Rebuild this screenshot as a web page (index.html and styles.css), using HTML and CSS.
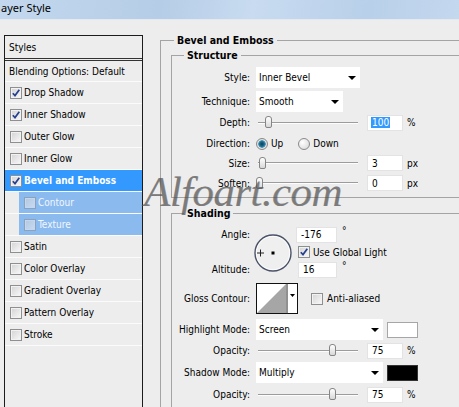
FILE: index.html
```html
<!DOCTYPE html>
<html>
<head>
<meta charset="utf-8">
<title>Layer Style</title>
<link rel="stylesheet" href="styles.css">
</head>
<body>
<div class="titlebar">ayer Style</div>
<div class="main">
  <div class="panel">
    <div class="p-row p-head">Styles</div>
    <div class="p-row p-blend">Blending Options: Default</div>
    <div class="p-row"><span class="cb"><svg width="10" height="10" viewBox="0 0 10 10"><path d="M1.8 5.2 L4 7.6 L8.3 1.8" fill="none" stroke="#25408f" stroke-width="1.7"/></svg></span>Drop Shadow</div>
    <div class="p-row"><span class="cb"><svg width="10" height="10" viewBox="0 0 10 10"><path d="M1.8 5.2 L4 7.6 L8.3 1.8" fill="none" stroke="#25408f" stroke-width="1.7"/></svg></span>Inner Shadow</div>
    <div class="p-row"><span class="cb"></span>Outer Glow</div>
    <div class="p-row"><span class="cb"></span>Inner Glow</div>
    <div class="p-row sel"><span class="cb"><svg width="10" height="10" viewBox="0 0 10 10"><path d="M1.8 5.2 L4 7.6 L8.3 1.8" fill="none" stroke="#25408f" stroke-width="1.7"/></svg></span>Bevel and Emboss</div>
    <div class="p-row sub"><div class="sub-in"><span class="cb faded"></span>Contour</div></div>
    <div class="p-row sub"><div class="sub-in"><span class="cb faded"></span>Texture</div></div>
    <div class="p-row"><span class="cb"></span>Satin</div>
    <div class="p-row"><span class="cb"></span>Color Overlay</div>
    <div class="p-row"><span class="cb"></span>Gradient Overlay</div>
    <div class="p-row"><span class="cb"></span>Pattern Overlay</div>
    <div class="p-row"><span class="cb"></span>Stroke</div>
  </div>

  <div class="content">
    <fieldset class="outer">
      <legend>Bevel and Emboss</legend>

      <fieldset class="inner structure">
        <legend>Structure</legend>
        <div class="f-row r-select gap3">
          <span class="lbl">Style:</span>
          <div class="select w-style"><span>Inner Bevel</span><span class="arrow"></span></div>
        </div>
        <div class="f-row r-select gap2">
          <span class="lbl">Technique:</span>
          <div class="select w-tech"><span>Smooth</span><span class="arrow"></span></div>
        </div>
        <div class="f-row r-17 gap4">
          <span class="lbl">Depth:</span>
          <div class="slider"><span class="track"></span><span class="thumb" style="left:9px"></span></div>
          <div class="num"><span class="hl">100</span></div>
          <span class="unit">%</span>
        </div>
        <div class="f-row r-17 gap3">
          <span class="lbl">Direction:</span>
          <span class="radio on"></span><span class="rtxt">Up</span>
          <span class="radio down"></span><span class="rtxt">Down</span>
        </div>
        <div class="f-row r-16 gap4">
          <span class="lbl">Size:</span>
          <div class="slider"><span class="track"></span><span class="thumb" style="left:3px"></span></div>
          <div class="num">3</div>
          <span class="unit">px</span>
        </div>
        <div class="f-row r-16">
          <span class="lbl">Soften:</span>
          <div class="slider"><span class="track"></span><span class="thumb" style="left:0px"></span></div>
          <div class="num">0</div>
          <span class="unit">px</span>
        </div>
      </fieldset>

      <fieldset class="inner shading">
        <legend>Shading</legend>
        <div class="angle-grid">
          <span class="lbl g-angle">Angle:</span>
          <svg class="dial" width="38" height="40" viewBox="0 0 38 40">
            <circle cx="19" cy="20" r="18" fill="#efefef" stroke="#4a5268" stroke-width="1.4"/>
            <circle cx="19" cy="20" r="16.6" fill="none" stroke="#ffffff" stroke-width="0.8"/>
            <path d="M3 20 H10 M6.5 16.5 V23.5" stroke="#222" stroke-width="1"/>
            <rect x="17.5" y="18.5" width="3" height="3" fill="#000"/>
          </svg>
          <div class="g-ain"><div class="num ang">-176</div><span class="deg">°</span></div>
          <div class="g-gl"><span class="cb"><svg width="10" height="10" viewBox="0 0 10 10"><path d="M1.8 5.2 L4 7.6 L8.3 1.8" fill="none" stroke="#25408f" stroke-width="1.7"/></svg></span><span>Use Global Light</span></div>
          <span class="lbl g-alt">Altitude:</span>
          <div class="g-altin"><div class="num alt">16</div><span class="deg">°</span></div>
        </div>
        <div class="f-row r-31 mt5">
          <span class="lbl">Gloss Contour:</span>
          <svg class="contour" width="42" height="31" viewBox="0 0 42 31">
            <rect x="0.5" y="0.5" width="41" height="30" fill="#fff" stroke="#111"/>
            <polygon points="1,30 30,1 30,30" fill="#a6a6a6"/>
            <line x1="31" y1="0" x2="31" y2="31" stroke="#222"/>
            <polygon points="34,11 39,11 36.5,14" fill="#000"/>
          </svg>
          <span class="cb aa"></span><span>Anti-aliased</span>
        </div>
        <div class="f-row r-select mt5">
          <span class="lbl">Highlight Mode:</span>
          <div class="select w-mode"><span>Screen</span><span class="arrow"></span></div>
          <span class="swatch white"></span>
        </div>
        <div class="f-row r-17 mt2">
          <span class="lbl">Opacity:</span>
          <div class="slider"><span class="track"></span><span class="thumb" style="left:73px"></span></div>
          <div class="num">75</div>
          <span class="unit">%</span>
        </div>
        <div class="f-row r-select mt3">
          <span class="lbl">Shadow Mode:</span>
          <div class="select w-mode"><span>Multiply</span><span class="arrow"></span></div>
          <span class="swatch black"></span>
        </div>
        <div class="f-row r-17 mt3">
          <span class="lbl">Opacity:</span>
          <div class="slider"><span class="track"></span><span class="thumb" style="left:73px"></span></div>
          <div class="num">75</div>
          <span class="unit">%</span>
        </div>
      </fieldset>
    </fieldset>
  </div>
</div>
<div class="watermark">Alfoart.com</div>
</body>
</html>
```
FILE: styles.css
```css
* { box-sizing: border-box; }
html, body { margin: 0; padding: 0; }
body {
  width: 459px;
  height: 407px;
  overflow: hidden;
  position: relative;
  background: #ededed;
  font-family: "DejaVu Sans Condensed", "Liberation Sans", sans-serif;
  font-size: 10px;
  color: #000;
}

.titlebar {
  height: 20px;
  padding: 1px 0 0 1px;
  background: linear-gradient(100deg, #c3d8ee 0%, #b6cde7 35%, #c8dbf0 55%, #b9d0ea 80%, #c4d8ee 100%);
  border-bottom: 1px solid #e4e9ef;
  font-family: "Noto Sans", "Open Sans", sans-serif;
  font-size: 11px;
  line-height: 14px;
  color: #000;
}

.main { display: flex; height: 387px; }

/* ---------- left styles list ---------- */
.panel {
  margin: 15px 0 0 4px;
  width: 139px;
  flex: none;
  border: 1px solid #1c1c1c;
  border-bottom: none;
}
.p-row {
  height: 22px;
  border-bottom: 1px solid #fbfbfb;
  display: flex;
  align-items: center;
  padding-left: 5px;
  white-space: nowrap;
}
.p-head { height: 25px; padding-left: 4px; border-bottom: 3px double #333; }
.p-blend { height: 21px; padding-left: 4px; }
.sel { background: #3399ff; color: #fff; font-weight: bold; }
.sub { padding-left: 14px; }
.sub-in {
  align-self: stretch;
  flex: 1;
  display: flex;
  align-items: center;
  padding-left: 5px;
  background: #8bbaee;
  color: #f2f7ff;
}

.cb {
  width: 12px;
  height: 12px;
  flex: none;
  margin-right: 2px;
  border: 1px solid #8e8f8f;
  background: linear-gradient(135deg, #d3d3d3, #f9f9f9);
  box-shadow: inset 0 0 0 1px #f2f2f2;
  display: flex;
  align-items: center;
  justify-content: center;
}
.cb svg { display: block; }
.cb.faded { opacity: 0.55; }

/* ---------- right settings ---------- */
.content { margin: 13px 0 0 17px; width: 330px; flex: none; }

fieldset {
  margin: 0;
  padding: 0;
  border: 1px solid #a4a4a4;
  min-width: 0;
}
legend {
  padding: 0 3px;
  line-height: 14px;
  font-weight: bold;
  font-size: 10.5px;
}
.outer { width: 330px; }
.outer > legend { margin-left: 13px; }
.inner { margin-left: 10px; width: 310px; }
.inner > legend { margin-left: 12px; }
.structure { margin-top: 1px; padding: 5px 0 6px 0; }
.shading { margin-top: 8px; padding: 6px 0 30px 0; }

.f-row { display: flex; align-items: center; white-space: nowrap; }
.r-select { height: 21px; }
.r-17 { height: 17px; }
.r-16 { height: 16px; }
.r-31 { height: 31px; }
.gap2 { margin-bottom: 2px; }
.gap3 { margin-bottom: 3px; }
.gap4 { margin-bottom: 4px; }
.mt2 { margin-top: 2px; }
.mt3 { margin-top: 3px; }
.mt5 { margin-top: 5px; }

.lbl { width: 78px; flex: none; text-align: right; margin-right: 6px; }

.select {
  height: 21px;
  background: #fff;
  display: flex;
  align-items: center;
  justify-content: space-between;
  padding: 0 4px 0 3px;
}
.w-style { width: 104px; }
.w-tech { width: 87px; }
.w-mode { width: 127px; }
.arrow {
  width: 0;
  height: 0;
  border-left: 4px solid transparent;
  border-right: 4px solid transparent;
  border-top: 4px solid #000;
}

.slider {
  position: relative;
  width: 102px;
  height: 13px;
  display: flex;
  align-items: center;
}
.track {
  margin-left: 2px;
  flex: 1;
  height: 2px;
  border-top: 1px solid #9c9c9c;
  border-bottom: 1px solid #fdfdfd;
}
.thumb {
  position: absolute;
  top: 0;
  width: 7px;
  height: 12px;
  border: 1px solid #858585;
  border-radius: 3px 3px 2px 2px;
  background: linear-gradient(#ffffff, #d8d8d8);
}

.num {
  width: 36px;
  height: 16px;
  margin-left: 9px;
  padding-left: 4px;
  background: #fff;
  border: 1px solid #e3e3e3;
  display: flex;
  align-items: center;
}
.hl { background: #3399ff; color: #fff; padding: 0 1px; margin-left: -1px; }
.unit { margin-left: 4px; }

.radio {
  width: 12px;
  height: 12px;
  flex: none;
  border-radius: 50%;
  border: 1px solid #8a8a8a;
  background: radial-gradient(circle at 35% 35%, #ffffff, #d4d4d4);
}
.radio.on {
  background: radial-gradient(circle at 50% 50%, #0e3e58 0, #1f6f92 2.5px, #5aa2c2 3.6px, #e8e8e8 4px, #cfcfcf 6px);
}
.radio.down { margin-left: 15px; }
.rtxt { margin-left: 3px; }

/* angle block */
.angle-grid {
  display: grid;
  grid-template-columns: 78px 46px auto;
  grid-template-rows: 17px 14px 17px;
  row-gap: 2px;
  align-items: center;
}
.angle-grid .lbl { margin-right: 0; }
.g-angle { grid-column: 1; grid-row: 1; }
.g-alt { grid-column: 1; grid-row: 3; }
.dial { grid-column: 2; grid-row: 1 / 4; align-self: start; margin: 7px 0 0 4px; display: block; }
.g-ain { grid-column: 3; grid-row: 1; display: flex; align-items: center; height: 17px; }
.g-gl { grid-column: 3; grid-row: 2; display: flex; align-items: center; padding-left: 2px; }
.g-gl .cb { margin-right: 3px; }
.g-altin { grid-column: 3; grid-row: 3; display: flex; align-items: center; height: 17px; padding-left: 2px; }
.num.ang { width: 41px; margin-left: 0; }
.num.alt { width: 39px; margin-left: 0; }
.deg { align-self: flex-start; margin-left: 5px; line-height: 9px; }

.contour { display: block; flex: none; }
.cb.aa { margin-left: 13px; margin-right: 4px; }

.swatch { width: 31px; height: 16px; margin-left: 4px; border: 1px solid #a6a6a6; }
.swatch.white { background: #fff; }
.swatch.black { background: #000; border-color: #333; }

.watermark {
  position: absolute;
  left: 144px;
  top: 167px;
  font-family: "Liberation Serif", serif;
  font-style: italic;
  font-size: 43px;
  letter-spacing: -0.6px;
  color: rgba(85, 85, 85, 0.62);
  text-shadow: 0.6px 0 0 rgba(85, 85, 85, 0.4);
  pointer-events: none;
}
```
